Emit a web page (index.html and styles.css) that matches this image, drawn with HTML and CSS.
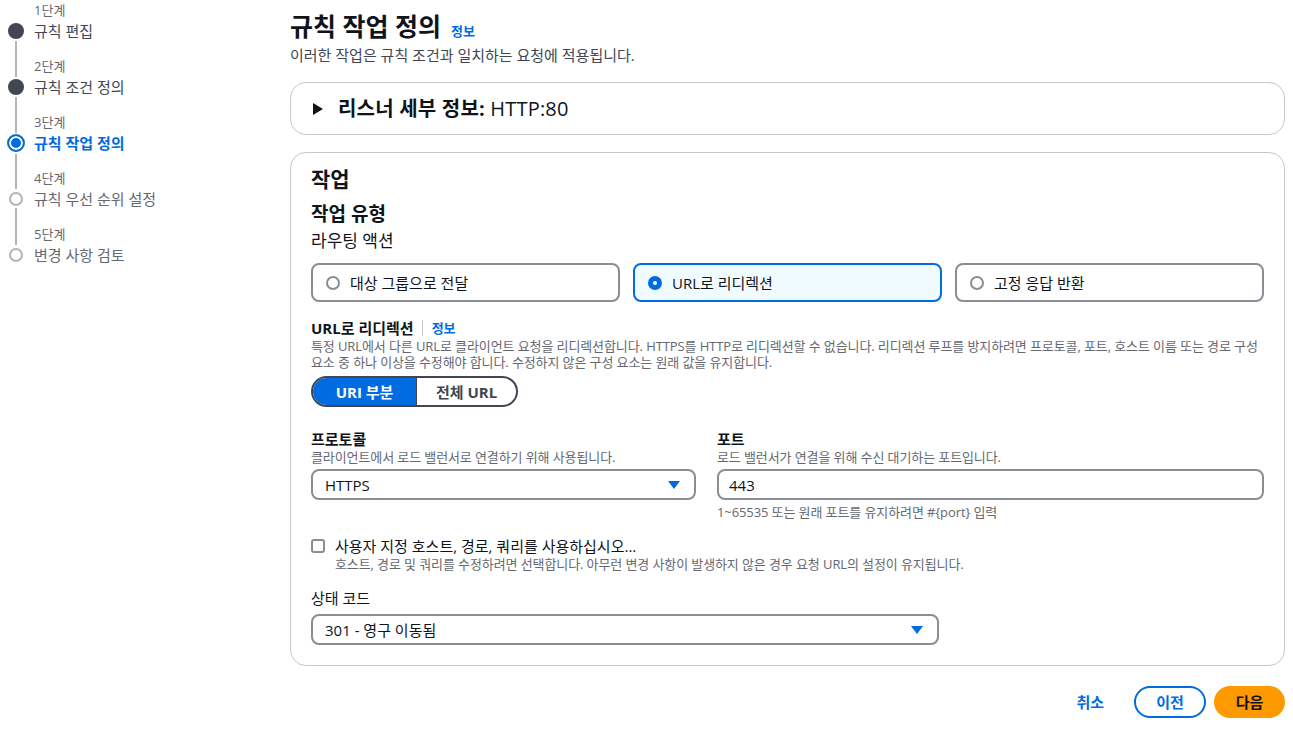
FILE: index.html
```html
<!DOCTYPE html>
<html lang="ko">
<head>
<meta charset="utf-8">
<title>규칙 작업 정의</title>
<link rel="stylesheet" href="styles.css">
</head>
<body>
<div class="page">
  <nav class="nav">
    <ol class="steps">
      <li class="step done first">
        <span class="line-top"></span>
        <span class="step-label">1단계</span>
        <span class="marker"><span class="dot"></span><span class="line-bottom"></span></span>
        <span class="step-title">규칙 편집</span>
      </li>
      <li class="step done">
        <span class="line-top"></span>
        <span class="step-label">2단계</span>
        <span class="marker"><span class="dot"></span><span class="line-bottom"></span></span>
        <span class="step-title">규칙 조건 정의</span>
      </li>
      <li class="step active">
        <span class="line-top"></span>
        <span class="step-label">3단계</span>
        <span class="marker"><span class="dot"></span><span class="line-bottom"></span></span>
        <span class="step-title">규칙 작업 정의</span>
      </li>
      <li class="step todo">
        <span class="line-top"></span>
        <span class="step-label">4단계</span>
        <span class="marker"><span class="dot"></span><span class="line-bottom"></span></span>
        <span class="step-title">규칙 우선 순위 설정</span>
      </li>
      <li class="step todo last">
        <span class="line-top"></span>
        <span class="step-label">5단계</span>
        <span class="marker"><span class="dot"></span></span>
        <span class="step-title">변경 사항 검토</span>
      </li>
    </ol>
  </nav>

  <main class="main">
    <div class="page-header">
      <h1 class="title">규칙 작업 정의</h1>
      <a class="info">정보</a>
    </div>
    <p class="subtitle">이러한 작업은 규칙 조건과 일치하는 요청에 적용됩니다.</p>

    <section class="box listener">
      <svg class="caret" width="10" height="12" viewBox="0 0 10 12"><path d="M0 0 L10 6 L0 12 Z" fill="#0f141a"/></svg>
      <span class="listener-text"><b>리스너 세부 정보:</b> HTTP:80</span>
    </section>

    <section class="box action">
      <h2 class="h2">작업</h2>
      <h3 class="h3">작업 유형</h3>
      <div class="routing">라우팅 액션</div>

      <div class="tiles">
        <div class="tile"><span class="radio"></span><span>대상 그룹으로 전달</span></div>
        <div class="tile selected"><span class="radio checked"></span><span>URL로 리디렉션</span></div>
        <div class="tile"><span class="radio"></span><span>고정 응답 반환</span></div>
      </div>

      <div class="redirect">
        <div class="label-row">
          <span class="field-label">URL로 리디렉션</span>
          <span class="divider"></span>
          <a class="info">정보</a>
        </div>
        <p class="desc">특정 URL에서 다른 URL로 클라이언트 요청을 리디렉션합니다. HTTPS를 HTTP로 리디렉션할 수 없습니다. 리디렉션 루프를 방지하려면 프로토콜, 포트, 호스트 이름 또는 경로 구성 요소 중 하나 이상을 수정해야 합니다. 수정하지 않은 구성 요소는 원래 값을 유지합니다.</p>
        <div class="segmented">
          <span class="seg on">URI 부분</span>
          <span class="seg">전체 URL</span>
        </div>
      </div>

      <div class="fields">
        <div class="field">
          <div class="field-label">프로토콜</div>
          <div class="desc">클라이언트에서 로드 밸런서로 연결하기 위해 사용됩니다.</div>
          <div class="select">
            <span>HTTPS</span>
            <svg width="12" height="8" viewBox="0 0 12 8"><path d="M0 0 H12 L6 8 Z" fill="#006ce0"/></svg>
          </div>
        </div>
        <div class="field">
          <div class="field-label">포트</div>
          <div class="desc">로드 밸런서가 연결을 위해 수신 대기하는 포트입니다.</div>
          <div class="input">443</div>
          <div class="desc hint">1~65535 또는 원래 포트를 유지하려면 #{port} 입력</div>
        </div>
      </div>

      <div class="check-row">
        <span class="checkbox"></span>
        <div>
          <div class="check-label">사용자 지정 호스트, 경로, 쿼리를 사용하십시오...</div>
          <div class="desc">호스트, 경로 및 쿼리를 수정하려면 선택합니다. 아무런 변경 사항이 발생하지 않은 경우 요청 URL의 설정이 유지됩니다.</div>
        </div>
      </div>

      <div class="status">
        <div class="status-label">상태 코드</div>
        <div class="select status-select">
          <span>301 - 영구 이동됨</span>
          <svg width="12" height="8" viewBox="0 0 12 8"><path d="M0 0 H12 L6 8 Z" fill="#006ce0"/></svg>
        </div>
      </div>
    </section>

    <div class="actions">
      <a class="link-btn">취소</a>
      <button class="btn normal">이전</button>
      <button class="btn primary">다음</button>
    </div>
  </main>
</div>
</body>
</html>
```

FILE: styles.css
```css
* { box-sizing: border-box; }
html, body { margin: 0; padding: 0; background: #fff; }
body {
  font-family: "Open Sans", "Noto Sans CJK KR", sans-serif;
  color: #0f141a;
  font-size: 15px;
  line-height: 20px;
  word-break: keep-all;
}
.page { display: flex; align-items: flex-start; }

/* nav */
.nav { flex: none; width: 290px; }
.steps { list-style: none; margin: 0; padding: 2px 0 0 6px; }
.step {
  display: grid;
  grid-template-columns: 20px 1fr;
  grid-template-rows: auto auto;
  column-gap: 8px;
}
.line-top {
  grid-column: 1; grid-row: 1;
  justify-self: center;
  width: 2px;
  background: #b4b4bb;
}
.first .line-top { background: transparent; }
.step-label {
  grid-column: 2; grid-row: 1;
  font-size: 13px; line-height: 16px;
  color: #656871;
  padding-bottom: 3px;
}
.marker {
  grid-column: 1; grid-row: 2;
  display: flex; flex-direction: column; align-items: center;
}
.line-bottom { flex: 1; width: 2px; background: #b4b4bb; margin-top: 2px; }
.step-title {
  grid-column: 2; grid-row: 2;
  font-size: 15px; line-height: 20px;
  padding-bottom: 17px;
}
.last .step-title { padding-bottom: 0; }
.dot { display: block; border-radius: 50%; flex: none; }
.done .dot { width: 16px; height: 16px; margin-top: 2px; background: #424650; }
.done .step-title { color: #424650; }
.active .dot {
  width: 18px; height: 18px; margin-top: 1px;
  border: 2px solid #006ce0; background: #006ce0;
  box-shadow: inset 0 0 0 2px #fff;
}
.active .step-title { color: #006ce0; font-weight: 700; }
.todo .dot { width: 14px; height: 14px; margin-top: 3px; border: 2px solid #b4b4bb; background: #fff; }
.todo .step-title { color: #656871; }

/* main */
.main { flex: 1; min-width: 0; padding: 11px 8px 0 0; }
.page-header { display: flex; align-items: baseline; gap: 10px; }
.title { margin: 0; font-size: 25px; line-height: 30px; font-weight: 700; }
.info { color: #006ce0; font-size: 13px; font-weight: 700; text-decoration: none; }
.subtitle { margin: 4px 0 0; font-size: 15px; line-height: 20px; color: #424650; }

.box { border: 1px solid #c6c6cd; border-radius: 16px; background: #fff; }
.listener {
  margin-top: 17px;
  padding: 14px 22px 13px;
  display: flex; align-items: center; gap: 15px;
  font-size: 20px; line-height: 24px;
}
.caret { flex: none; }
.listener-text { letter-spacing: 0.2px; }
.listener-text b { font-weight: 700; }

.action { margin-top: 17px; padding: 15px 20px 20px; }
.h2 { margin: 0; font-size: 21px; line-height: 22px; font-weight: 700; }
.h3 { margin: 14px 0 0; font-size: 19px; line-height: 20px; font-weight: 700; }
.routing { margin-top: 7px; font-size: 17px; line-height: 20px; }

.tiles {
  margin-top: 12px;
  display: grid; grid-template-columns: repeat(3, 1fr); column-gap: 13px;
}
.tile {
  height: 39px;
  border: 2px solid #8c8c94; border-radius: 8px;
  display: flex; align-items: center; gap: 10px;
  padding-left: 13px;
  font-size: 15px;
}
.tile.selected { border-color: #006ce0; background: #f0fbff; }
.radio {
  width: 14px; height: 14px; flex: none;
  border-radius: 50%; border: 2px solid #8c8c94; background: #fff;
}
.radio.checked { border: 5px solid #006ce0; }

.redirect { margin-top: 16px; }
.label-row { display: flex; align-items: center; }
.field-label { font-size: 15px; line-height: 20px; font-weight: 700; }
.divider { width: 1px; height: 16px; background: #c6c6cd; margin: 0 9px 0 8px; }
.desc { margin: 0; font-size: 13px; line-height: 16px; color: #656871; letter-spacing: -0.1px; }

.segmented {
  margin-top: 6px;
  display: inline-flex;
  height: 31px;
  border: 2px solid #424650; border-radius: 16px;
  overflow: hidden;
}
.seg {
  display: flex; align-items: center; justify-content: center;
  font-size: 15px; font-weight: 700; color: #424650;
}
.seg.on { width: 104px; background: #006ce0; color: #fff; border-right: 1px solid #424650; }
.seg:not(.on) { width: 99px; }

.fields {
  margin-top: 22px;
  display: grid; grid-template-columns: 385fr 547fr; column-gap: 21px;
  align-items: start;
}
.select, .input {
  margin-top: 4px;
  height: 31px;
  border: 2px solid #8c8c94; border-radius: 8px;
  display: flex; align-items: center;
  font-size: 15px;
}
.select { justify-content: space-between; padding: 0 14px 0 12px; }
.input { padding: 0 10px; }
.hint { margin-top: 4px; }

.check-row {
  margin-top: 16px;
  display: grid; grid-template-columns: 14px 1fr; column-gap: 10px;
}
.checkbox {
  width: 14px; height: 14px; margin-top: 3px;
  border: 2px solid #8c8c94; border-radius: 3px;
}
.check-label { font-size: 15px; line-height: 20px; }

.status { margin-top: 16px; }
.status-label { font-size: 15px; line-height: 20px; }
.status-select { width: 628px; margin-top: 6px; }

.actions {
  margin-top: 20px;
  display: flex; justify-content: flex-end; align-items: center; gap: 8px;
}
.link-btn {
  color: #006ce0; font-weight: 700; font-size: 15px;
  padding: 4px 22px 4px 20px;
}
.btn {
  font-family: inherit; font-size: 15px; font-weight: 700; line-height: 20px;
  height: 32px; border-radius: 20px; padding: 0;
  border: 2px solid transparent; cursor: pointer;
}
.btn.normal { border-color: #006ce0; background: #fff; color: #006ce0; width: 72px; }
.btn.primary { background: #ff9900; border-color: #ff9900; color: #0f141a; width: 71px; }
```
